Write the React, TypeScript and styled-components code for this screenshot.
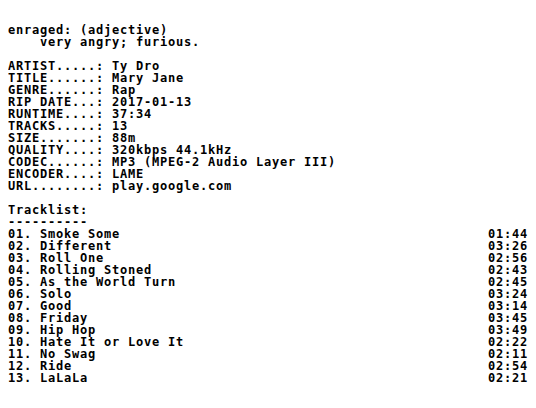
import React from "react";
import styled, { createGlobalStyle } from "styled-components";

const Global = createGlobalStyle`
  html, body { margin: 0; padding: 0; background: #ffffff; }
  body { margin: 8px; }
`;

const Page = styled.div`
  padding-top: 16px;
  font-family: "DejaVu Sans Mono", "Liberation Mono", monospace;
  font-weight: bold;
  font-size: 12px;
  letter-spacing: 0.78px;
  line-height: 12px;
  color: #000000;
  white-space: pre;
  display: flex;
  flex-direction: column;
  gap: 12px;
`;

const Block = styled.section`
  display: flex;
  flex-direction: column;
`;

const Line = styled.div<{ $indent?: number }>`
  height: 12px;
  padding-left: ${(p) => (p.$indent ?? 0) * 8}px;
`;

const MetaRow = styled.div`
  display: flex;
  height: 12px;
`;

const Label = styled.span`
  width: 104px;
`;

const TrackRow = styled.div`
  display: flex;
  justify-content: space-between;
  height: 12px;
`;

const meta: [string, string][] = [
  ["ARTIST", "Ty Dro"],
  ["TITLE", "Mary Jane"],
  ["GENRE", "Rap"],
  ["RIP DATE", "2017-01-13"],
  ["RUNTIME", "37:34"],
  ["TRACKS", "13"],
  ["SIZE", "88m"],
  ["QUALITY", "320kbps 44.1kHz"],
  ["CODEC", "MP3 (MPEG-2 Audio Layer III)"],
  ["ENCODER", "LAME"],
  ["URL", "play.google.com"],
];

const tracks: [string, string][] = [
  ["Smoke Some", "01:44"],
  ["Different", "03:26"],
  ["Roll One", "02:56"],
  ["Rolling Stoned", "02:43"],
  ["As the World Turn", "02:45"],
  ["Solo", "03:24"],
  ["Good", "03:14"],
  ["Friday", "03:45"],
  ["Hip Hop", "03:49"],
  ["Hate It or Love It", "02:22"],
  ["No Swag", "02:11"],
  ["Ride", "02:54"],
  ["LaLaLa", "02:21"],
];

export default function App() {
  return (
    <>
      <Global />
      <Page>
        <Block>
          <Line>enraged: (adjective)</Line>
          <Line $indent={4}>very angry; furious.</Line>
        </Block>
        <Block>
          {meta.map(([k, v]) => (
            <MetaRow key={k}>
              <Label>{(k + ".".repeat(11)).slice(0, 11) + ": "}</Label>
              <span>{v}</span>
            </MetaRow>
          ))}
        </Block>
        <Block>
          <Line>Tracklist:</Line>
          <Line>----------</Line>
          {tracks.map(([t, d], i) => (
            <TrackRow key={t}>
              <span>{String(i + 1).padStart(2, "0") + ". " + t}</span>
              <span>{d}</span>
            </TrackRow>
          ))}
        </Block>
      </Page>
    </>
  );
}
